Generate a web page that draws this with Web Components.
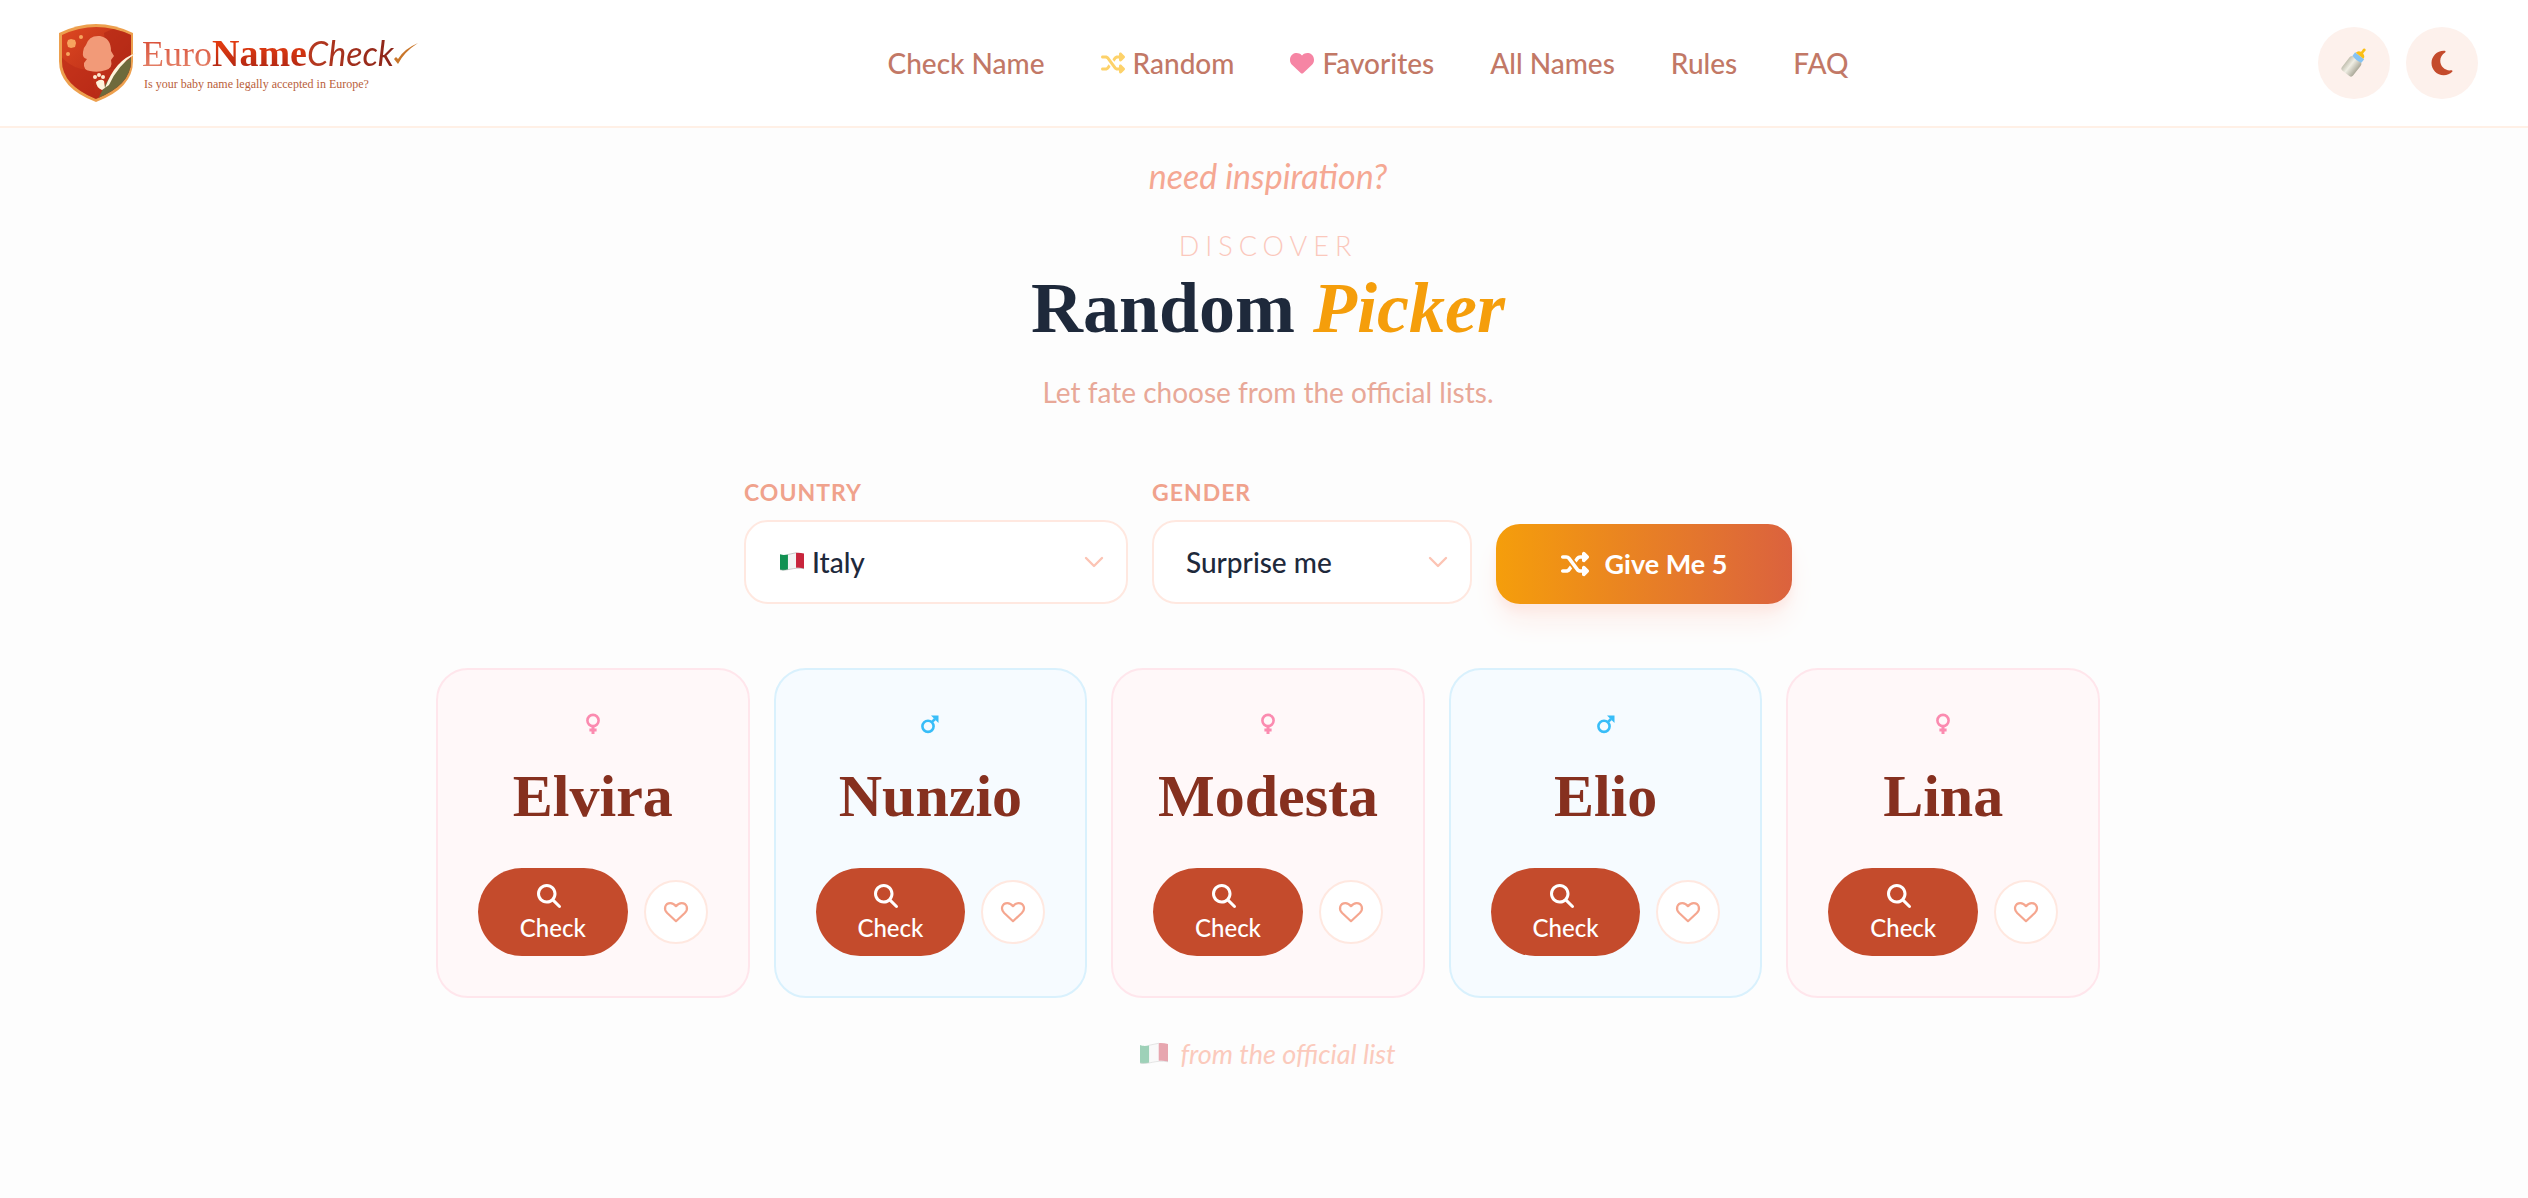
<!DOCTYPE html>
<html lang="en">
<head>
<meta charset="UTF-8">
<meta name="viewport" content="width=device-width, initial-scale=1.0">
<title>EuroNameCheck - Random Picker</title>
<style>
  body {
    margin: 0;
    background: #fdfdfd;
    color: #1e293b;
    font-family: Lato, "Open Sans", sans-serif;
    --serif: "Liberation Serif", serif;
    --rust: #c44b2c;
    --peach: #ffe8e0;
  }
  em { color: #f59e0b; }
</style>
</head>
<body>
<site-header></site-header>
<main>
  <page-hero>
    <span slot="note">need inspiration?</span>
    <span slot="eyebrow">DISCOVER</span>
    <span slot="title">Random <em>Picker</em></span>
    <span slot="lead">Let fate choose from the official lists.</span>
  </page-hero>
  <picker-form></picker-form>
  <name-list></name-list>
</main>

<script>
const ICONS = {
  shuffle: `<svg viewBox="0 0 512 512" fill="currentColor"><path d="M403.8 34.4c12-5 25.7-2.2 34.9 6.9l64 64c6 6 9.4 14.1 9.4 22.6s-3.4 16.6-9.4 22.6l-64 64c-9.2 9.2-22.9 11.9-34.9 6.9s-19.8-16.6-19.8-29.6V160H352c-10.1 0-19.6 4.7-25.6 12.8L284 229.3 244 176l31.2-41.6C293.3 110.2 321.8 96 352 96h32V64c0-12.9 7.8-24.6 19.8-29.6zM164 282.7L204 336l-31.2 41.6C154.7 401.8 126.2 416 96 416H32c-17.7 0-32-14.3-32-32s14.3-32 32-32H96c10.1 0 19.6-4.7 25.6-12.8L164 282.7zm274.6 188c-9.2 9.2-22.9 11.9-34.9 6.9s-19.8-16.6-19.8-29.6V416H352c-30.2 0-58.7-14.2-76.8-38.4L121.6 172.8c-6-8.1-15.5-12.8-25.6-12.8H32c-17.7 0-32-14.3-32-32s14.3-32 32-32H96c30.2 0 58.7 14.2 76.8 38.4L326.4 339.2c6 8.1 15.5 12.8 25.6 12.8h32V320c0-12.9 7.8-24.6 19.8-29.6s25.7-2.2 34.9 6.9l64 64c6 6 9.4 14.1 9.4 22.6s-3.4 16.6-9.4 22.6l-64 64z"/></svg>`,
  heart: `<svg viewBox="0 0 512 512" fill="currentColor"><path d="M47.6 300.4L228.3 469.1c7.5 7 17.4 10.9 27.7 10.9s20.2-3.9 27.7-10.9L464.4 300.4c30.4-28.3 47.6-68 47.6-109.5v-5.8c0-69.9-50.5-129.5-119.4-141C347 36.5 300.6 51.4 268 84L256 96 244 84c-32.6-32.6-79-47.5-124.6-39.9C50.5 55.6 0 115.2 0 185.1v5.8c0 41.5 17.2 81.2 47.6 109.5z"/></svg>`,
  heartOutline: `<svg viewBox="0 0 24 24" fill="none" stroke="currentColor" stroke-width="2.2" stroke-linejoin="round"><path d="M12 21.2 3.2 13C-.8 9 1 3.2 6.4 3.1c2.6 0 4.2 1.3 5.6 3.1 1.4-1.8 3-3.1 5.6-3.1C23 3.2 24.8 9 20.8 13z"/></svg>`,
  search: `<svg viewBox="0 0 512 512" fill="currentColor"><path d="M416 208c0 45.900-14.900 88.300-40 122.700L502.600 457.400c12.500 12.500 12.500 32.800 0 45.300s-32.800 12.500-45.300 0L330.700 376c-34.400 25.200-76.800 40-122.700 40C93.100 416 0 322.900 0 208S93.100 0 208 0S416 93.100 416 208zM208 352a144 144 0 1 0 0-288 144 144 0 1 0 0 288z"/></svg>`,
  moon: `<svg viewBox="-64 0 512 512" fill="currentColor"><path d="M223.500 32C100 32 0 132.300 0 256S100 480 223.500 480c60.600 0 115.500-24.200 155.800-63.400c5-4.900 6.300-12.500 3.100-18.700s-10.100-9.700-17-8.500c-9.800 1.700-19.800 2.600-30.100 2.600c-96.900 0-175.500-78.800-175.500-176c0-65.800 36-123.100 89.300-153.300c6.100-3.500 9.200-10.500 7.700-17.300s-7.300-11.900-14.300-12.500c-6.300-.5-12.600-.8-19-.8z"/></svg>`,
  chevron: `<svg viewBox="0 0 24 24" fill="none" stroke="currentColor" stroke-width="2.4" stroke-linecap="round" stroke-linejoin="round"><path d="M4 8l8 8 8-8"/></svg>`,
  female: `<svg viewBox="0 0 20 20" fill="none" stroke="currentColor" stroke-width="2.6"><circle cx="10" cy="6.5" r="5.6"/><path d="M10 12v8M6.400 16h7.200" stroke-width="3"/></svg>`,
  male: `<svg viewBox="0 0 20 20" fill="none" stroke="currentColor" stroke-width="2.6"><circle cx="8" cy="12.300" r="5.600"/><path d="M11.800 8.200 15 5"/><path d="M11 1.500h7.500v7.500z" fill="currentColor" stroke="none"/></svg>`,
  flag: `<svg viewBox="0 0 28 22"><path d="M0 2c4 1.500 6 .8 9.300.3v17.400c-3.300.6-6 1.300-9.300.3z" fill="#129152"/><path d="M9.300 2.300C13 1.600 15 .6 18.700.2v17.600c-3.700.4-6 1.500-9.400 1.900z" fill="#f4f4f4"/><path d="M18.700.2C22-.2 25 .4 28 1v17.800c-3-1-6-1.400-9.300-1z" fill="#c8253c"/><path d="M0 20c9 2 15-3.500 28-1.200M9 2.300Q14 1.200 19 .2" fill="none" stroke="#999" stroke-width=".6"/></svg>`,
  bottle: `<svg viewBox="0 0 32 32">
    <defs><linearGradient id="milk" x1="0" x2="1"><stop offset="0" stop-color="#c2c0b0"/><stop offset=".4" stop-color="#f0eee4"/><stop offset="1" stop-color="#aaa898"/></linearGradient></defs>
    <g transform="rotate(38 16 16)">
      <path d="M8 14q0-3 3-4h10q3 1 3 4v14q0 3-3 3h-10q-3 0-3-3z" fill="url(#milk)"/>
      <path d="M9.500 10.500v-5h13v5q-6.500 2-13 0z" fill="#86c3f2"/>
      <path d="M10.500 5.500q0-3.500 4-4.500v-2q-1-3.500 1.500-3.500t1.500 3.500v2q4 1 4 4.500z" fill="#fbbf16"/>
    </g></svg>`
};

class AppIcon extends HTMLElement {
  constructor() {
    super();
    this.attachShadow({ mode: "open" });
  }

  connectedCallback() {
    this.shadowRoot.innerHTML = `
      <style>
        :host { display: inline-block; width: 24px; height: 24px; flex: none; }
        svg { display: block; width: 100%; height: 100%; overflow: visible; }
      </style>
      ${ICONS[this.getAttribute("name")]}
    `;
  }
}

class SiteLogo extends HTMLElement {
  constructor() {
    super();
    this.attachShadow({ mode: "open" });
  }

  connectedCallback() {
    this.shadowRoot.innerHTML = `
      <style>
        :host { display: block; }
        a { display: flex; align-items: center; gap: 4px; text-decoration: none; }
        .shield { width: 80px; height: 80px; }
        .word { display: flex; align-items: baseline; font: 36px/40px var(--serif); }
        .word span { background-clip: text; color: transparent; }
        .euro { background-image: linear-gradient(#d8452f, #e58a70); }
        .name { font-weight: bold; font-size: 38px; background-image: linear-gradient(#e03a10 30%, #a82414); }
        .check { font: italic 34px/40px Lato, sans-serif; background-image: linear-gradient(90deg, #b83a20, #8c2418); }
        .tick { width: 24px; height: 24px; }
        .tag { font: 12px/20px var(--serif); color: #b9603a; padding-left: 2px; }
      </style>
      <a href="#">
        <svg class="shield" viewBox="0 0 80 80">
          <defs>
            <linearGradient id="red" x1="0" y1="0" x2="1" y2="1">
              <stop offset="0" stop-color="#e04a22"/><stop offset="1" stop-color="#a81f12"/>
            </linearGradient>
            <clipPath id="inner"><path d="M4 12Q38-4 73 12V38Q73 62 38 76Q4 62 4 38Z"/></clipPath>
          </defs>
          <path d="M1 10Q38-8 75 10V38Q75 65 38 79Q1 65 1 38Z" fill="#eda04e"/>
          <g clip-path="url(#inner)">
            <path d="M0 0h80v80H0z" fill="url(#red)"/>
            <path d="M46 10q14-8 30-4v40H50z" fill="#b32815" opacity=".6"/>
            <path d="M0 30q14 18 34 17l4 32H0z" fill="#b92a17" opacity=".55"/>
            <path d="M38 80 48 60Q58 42 78 32V80Z" fill="#6e6a3c"/>
          </g>
          <path d="M28 22Q31 12 42 13Q53 15 53 28L56 33 53 37Q55 45 48 47Q40 50 32 48Q25 47 26 40L29 36Q24 35 25 29Q25 25 28 22Z" fill="#f29a78"/>
          <path d="M10 17l3-1 4 1 1 3-1 4-4 1-3-1-1-4z" fill="#f7a45e"/>
          <circle cx="23" cy="14" r="2" fill="#f7a45e"/><circle cx="10" cy="31" r="2" fill="#f7a45e"/>
          <circle cx="37" cy="54" r="2" fill="#fdebd0"/><circle cx="41" cy="52" r="2" fill="#fdebd0"/><circle cx="45" cy="54" r="2" fill="#fdebd0"/>
          <path d="M38 59q5-4 8-1l1 7Q57 37 78 30Q60 42 51 62L44 67Q38 64 38 59Z" fill="#fff3dc"/>
        </svg>
        <div>
          <div class="word">
            <span class="euro">Euro</span><span class="name">Name</span><span class="check">Check</span>
            <svg class="tick" viewBox="0 0 24 24"><path d="M0 17l4 5Q10 10 24 1Q10 7 4 17l-2-2z" fill="#c9762a"/></svg>
          </div>
          <div class="tag">Is your baby name legally accepted in Europe?</div>
        </div>
      </a>
    `;
  }
}

class SiteHeader extends HTMLElement {
  constructor() {
    super();
    this.attachShadow({ mode: "open" });
  }

  connectedCallback() {
    this.shadowRoot.innerHTML = `
      <style>
        :host { display: block; background: #fff; border-bottom: 2px solid #fff0e6; }
        header {
          display: flex;
          justify-content: space-between;
          align-items: center;
          min-height: 126px;
          padding: 0 50px 0 58px;
          box-sizing: border-box;
        }
        nav { display: flex; gap: 56px; }
        nav a {
          display: flex;
          align-items: center;
          gap: 8px;
          color: #c27866;
          font-size: 28px;
          line-height: 40px;
          font-weight: 500;
          text-decoration: none;
        }
        .random { color: #fdd26a; }
        .fav { color: #f685a4; }
        .tools { display: flex; gap: 16px; }
        button {
          display: grid;
          place-items: center;
          width: 72px;
          height: 72px;
          padding: 0;
          border: 0;
          border-radius: 50%;
          background: #fdf1ec;
          color: var(--rust);
        }
        button app-icon { width: 28px; height: 28px; }
      </style>
      <header>
        <site-logo></site-logo>
        <nav>
          <a href="#">Check Name</a>
          <a href="#"><app-icon class="random" name="shuffle"></app-icon>Random</a>
          <a href="#"><app-icon class="fav" name="heart"></app-icon>Favorites</a>
          <a href="#">All Names</a>
          <a href="#">Rules</a>
          <a href="#">FAQ</a>
        </nav>
        <div class="tools">
          <button type="button" aria-label="Baby mode"><app-icon name="bottle"></app-icon></button>
          <button type="button" aria-label="Dark mode"><app-icon name="moon"></app-icon></button>
        </div>
      </header>
    `;
  }
}

class PageHero extends HTMLElement {
  constructor() {
    super();
    this.attachShadow({ mode: "open" });
  }

  connectedCallback() {
    this.shadowRoot.innerHTML = `
      <style>
        :host { display: block; padding: 26px 0 0 8px; text-align: center; }
        p, h1 { margin: 0; }
        .note { font-size: 34px; line-height: 44px; font-style: italic; color: #f5a893; }
        .eyebrow {
          margin-top: 30px;
          font-size: 27px;
          line-height: 36px;
          font-weight: 300;
          letter-spacing: 6px;
          color: #fbc8bc;
        }
        h1 { font: bold 72px/88px var(--serif); }
        .lead { margin-top: 18px; font-size: 28px; line-height: 44px; color: #e8a898; }
      </style>
      <p class="note"><slot name="note"></slot></p>
      <p class="eyebrow"><slot name="eyebrow"></slot></p>
      <h1><slot name="title"></slot></h1>
      <p class="lead"><slot name="lead"></slot></p>
    `;
  }
}

class PickerForm extends HTMLElement {
  constructor() {
    super();
    this.attachShadow({ mode: "open" });
  }

  connectedCallback() {
    this.shadowRoot.innerHTML = `
      <style>
        :host { display: block; padding: 62px 0 0 8px; }
        form { display: flex; justify-content: center; align-items: flex-end; gap: 24px; }
        label {
          display: block;
          margin-bottom: 12px;
          font-size: 23px;
          line-height: 32px;
          font-weight: 700;
          letter-spacing: 1px;
          color: #f0a28c;
        }
        .box { position: relative; width: 384px; }
        .box.gender { width: 320px; }
        select {
          appearance: none;
          display: block;
          width: 100%;
          height: 84px;
          padding: 0 64px 0 32px;
          border: 2px solid var(--peach);
          border-radius: 24px;
          background: #fff;
          color: #1e293b;
          font: 500 28px/40px Lato, sans-serif;
        }
        .country select { padding-left: 66px; }
        .flag, .arrow { position: absolute; pointer-events: none; }
        .flag { left: 36px; top: 30px; }
        .arrow { right: 22px; top: 30px; color: #fcc4b4; }
        button {
          display: flex;
          justify-content: center;
          align-items: center;
          gap: 16px;
          width: 296px;
          height: 80px;
          border: 0;
          border-radius: 24px;
          background: linear-gradient(90deg, #f59e0b, #db623e);
          box-shadow: 0 20px 30px -6px #fdebe6, 0 8px 12px -4px #fcdad4;
          color: #fff;
          font: 700 27px/40px Lato, sans-serif;
        }
        button app-icon { width: 28px; height: 28px; }
      </style>
      <form>
        <div>
          <label for="country">COUNTRY</label>
          <div class="box country">
            <select id="country"><option>Italy</option></select>
            <app-icon class="flag" name="flag"></app-icon>
            <app-icon class="arrow" name="chevron"></app-icon>
          </div>
        </div>
        <div>
          <label for="gender">GENDER</label>
          <div class="box gender">
            <select id="gender"><option>Surprise me</option></select>
            <app-icon class="arrow" name="chevron"></app-icon>
          </div>
        </div>
        <button type="button"><app-icon name="shuffle"></app-icon>Give Me 5</button>
      </form>
    `;
  }
}

class NameCard extends HTMLElement {
  constructor() {
    super();
    this.attachShadow({ mode: "open" });
  }

  connectedCallback() {
    this.shadowRoot.innerHTML = `
      <style>
        :host {
          display: block;
          padding: 42px 40px 40px;
          border: 2px solid #ffe6ec;
          border-radius: 32px;
          background: #fff8f9;
          text-align: center;
        }
        :host([gender="male"]) { border-color: #d9f1fd; background: #f6fbff; }
        .symbol { display: block; width: 20px; height: 20px; margin: 2px auto 22px; color: #fb8bb0; }
        :host([gender="male"]) .symbol { color: #38bdf8; }
        h2 { margin: 0 0 32px; font: bold 60px/80px var(--serif); color: #86301f; }
        .actions { display: flex; align-items: center; gap: 16px; }
        .check {
          flex: 1;
          display: flex;
          flex-direction: column;
          align-items: center;
          gap: 4px;
          height: 88px;
          padding: 16px 0 8px;
          border: 0;
          border-radius: 44px;
          background: var(--rust);
          color: #fff;
          font: 500 24px/32px Lato, sans-serif;
        }
        .check app-icon { margin-right: 8px; }
        .save {
          display: grid;
          place-items: center;
          width: 64px;
          height: 64px;
          padding: 0;
          border: 2px solid var(--peach);
          border-radius: 50%;
          background: #fff;
          color: #f5a68f;
        }
      </style>
      <app-icon class="symbol" name="${this.getAttribute("gender")}"></app-icon>
      <h2><slot></slot></h2>
      <div class="actions">
        <button class="check" type="button"><app-icon name="search"></app-icon>Check</button>
        <button class="save" type="button" aria-label="Save"><app-icon name="heartOutline"></app-icon></button>
      </div>
    `;
  }
}

class NameList extends HTMLElement {
  constructor() {
    super();
    this.attachShadow({ mode: "open" });
    this.names = [
      ["Elvira", "female"],
      ["Nunzio", "male"],
      ["Modesta", "female"],
      ["Elio", "male"],
      ["Lina", "female"]
    ];
  }

  connectedCallback() {
    this.shadowRoot.innerHTML = `
      <style>
        :host { display: block; padding: 64px 0 40px 8px; }
        .grid {
          display: grid;
          grid-template-columns: repeat(5, minmax(0, 1fr));
          gap: 24px;
          max-width: 1664px;
          margin: 0 auto;
        }
        .source {
          display: flex;
          justify-content: center;
          align-items: center;
          gap: 12px;
          margin: 36px 0 0;
          font-size: 27px;
          line-height: 40px;
          font-style: italic;
          color: #fbcabc;
        }
        .source app-icon { width: 28px; opacity: .4; }
      </style>
      <div class="grid">
        ${this.names.map(([name, gender]) => `<name-card gender="${gender}">${name}</name-card>`).join("")}
      </div>
      <p class="source"><app-icon name="flag"></app-icon>from the official list</p>
    `;
  }
}

customElements.define("app-icon", AppIcon);
customElements.define("site-logo", SiteLogo);
customElements.define("site-header", SiteHeader);
customElements.define("page-hero", PageHero);
customElements.define("picker-form", PickerForm);
customElements.define("name-card", NameCard);
customElements.define("name-list", NameList);
</script>
</body>
</html>
